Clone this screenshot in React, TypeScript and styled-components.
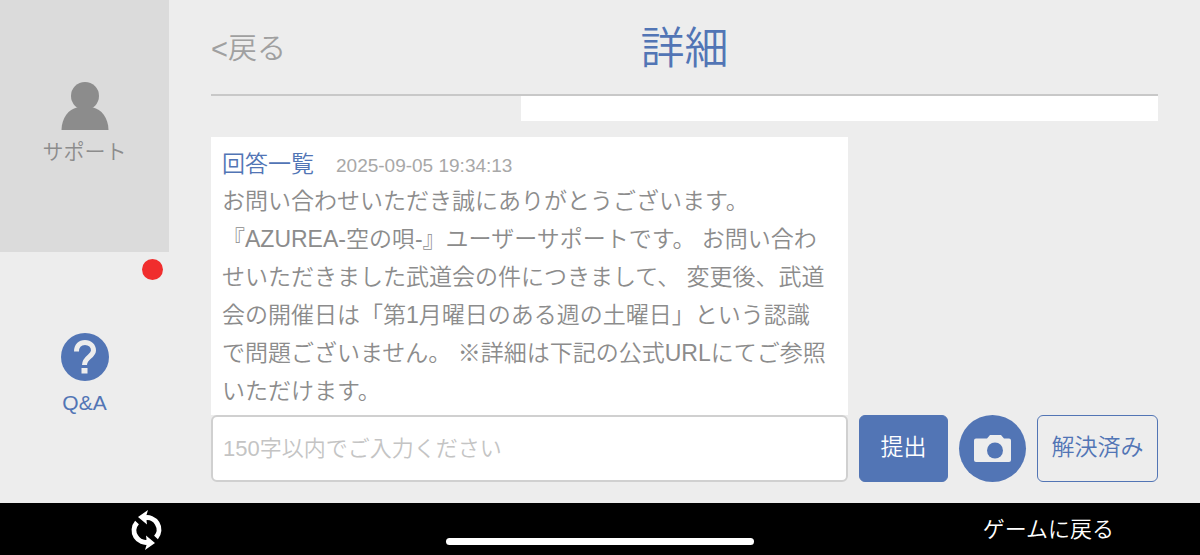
import React from "react";
import styled, { createGlobalStyle } from "styled-components";

const blue = "#5275b5";
const gray = "#8c8c8c";

const GlobalStyle = createGlobalStyle`
  *, *::before, *::after { box-sizing: border-box; }
  body {
    margin: 0;
    background: #ededed;
    color: ${gray};
    font-family: "Liberation Sans", "Noto Sans CJK JP", sans-serif;
    font-weight: 350;
  }
  button, input { font: inherit; }
`;

const Page = styled.div`
  display: flex;
  flex-direction: column;
  height: 100vh;
`;

const Body = styled.div`
  display: flex;
  flex: 1;
  min-height: 0;
`;

const Sidebar = styled.nav`
  display: flex;
  flex-direction: column;
  flex: 0 0 169px;
`;

const Tab = styled.a<{ $active?: boolean }>`
  position: relative;
  flex: 1;
  display: flex;
  flex-direction: column;
  align-items: center;
  justify-content: center;
  gap: 8px;
  padding-bottom: 4px;
  background: ${(p) => (p.$active ? "#dbdbdb" : "transparent")};
  color: ${(p) => (p.$active ? gray : blue)};
  font-size: 21px;
  line-height: 28px;
  text-decoration: none;
`;

const TabIcon = styled.svg`
  width: 48px;
  height: 48px;
`;

const Badge = styled.span`
  position: absolute;
  top: 7px;
  right: 6px;
  width: 21px;
  height: 21px;
  border-radius: 50%;
  background: #f02d2d;
`;

const Main = styled.main`
  flex: 1;
  min-width: 0;
  display: flex;
  flex-direction: column;
  padding: 0 42px 21px;
`;

const Header = styled.header`
  display: grid;
  grid-template-columns: 1fr auto 1fr;
  align-items: center;
  height: 96px;
  padding-top: 4px;
  border-bottom: 2px solid #c8c8c8;
`;

const Back = styled.a`
  color: #a0a0a0;
  font-size: 29px;
  line-height: 40px;
  text-decoration: none;
`;

const Title = styled.h1`
  margin: 0;
  color: ${blue};
  font-size: 44px;
  font-weight: 350;
  line-height: 64px;
`;

const Thread = styled.div`
  flex: 1;
  min-height: 0;
  overflow: hidden;
  display: flex;
  flex-direction: column;
  gap: 16px;
`;

const OwnMessage = styled.div`
  flex: 0 0 25px;
  width: calc(100% - 310px);
  align-self: flex-end;
  background: #fff;
`;

const Reply = styled.article`
  flex: 1;
  width: calc(100% - 310px);
  padding: 11px 18px 0 11px;
  background: #fff;
  font-size: 23px;
  line-height: 38px;
`;

const ReplyHead = styled.div`
  display: flex;
  align-items: baseline;
  gap: 22px;
  line-height: 32px;
`;

const ReplyTitle = styled.h2`
  margin: 0;
  color: ${blue};
  font-size: 23px;
  font-weight: 350;
`;

const Time = styled.time`
  color: #a8a8a8;
  font-size: 19px;
`;

const Text = styled.p`
  margin: 0;
`;

const Form = styled.form`
  display: flex;
  gap: 11px;
  height: 67px;
`;

const Field = styled.input`
  flex: 1;
  min-width: 0;
  padding: 0 10px;
  border: 2px solid #d0d0d0;
  border-radius: 6px;
  background: #fff;
  color: ${gray};
  font-size: 22px;
  outline: none;
  &::placeholder { color: #c4c4c4; opacity: 1; }
`;

const Action = styled.button<{ $outline?: boolean }>`
  flex: 0 0 ${(p) => (p.$outline ? 121 : 89)}px;
  padding: 0 0 8px;
  border: 1px solid ${blue};
  border-radius: 6px;
  background: ${(p) => (p.$outline ? "transparent" : blue)};
  color: ${(p) => (p.$outline ? blue : "#fff")};
  font-size: 23px;
`;

const CameraButton = styled.button`
  flex: 0 0 67px;
  padding: 0;
  border: 0;
  border-radius: 50%;
  background: ${blue};
  svg { display: block; width: 67px; height: 67px; }
`;

const Footer = styled.footer`
  position: relative;
  display: flex;
  align-items: center;
  justify-content: space-between;
  height: 52px;
  padding: 0 86px 0 126px;
  background: #000;
`;

const FooterButton = styled.button`
  padding: 0;
  border: 0;
  background: none;
  color: #fff;
`;

const RefreshIcon = styled.svg`
  display: block;
  width: 40px;
  height: 46px;
`;

const ReturnLabel = styled.span`
  display: block;
  padding-bottom: 4px;
  font-size: 22px;
`;

const HomeIndicator = styled.div`
  position: absolute;
  bottom: 10px;
  left: 50%;
  width: 308px;
  height: 7px;
  margin-left: -154px;
  border-radius: 4px;
  background: #fff;
`;

export default function App() {
  return (
    <Page>
      <GlobalStyle />
      <Body>
        <Sidebar>
          <Tab href="#support" $active>
            <TabIcon viewBox="0 0 48 48" aria-hidden="true">
              <circle cx="24" cy="14" r="14" fill={gray} />
              <path d="M0.5 48C0.5 36 8 27 16 25.500h16C40 27 47.500 36 47.500 48z" fill={gray} />
            </TabIcon>
            サポート
          </Tab>
          <Tab href="#qa">
            <Badge />
            <TabIcon viewBox="0 0 48 48" aria-hidden="true">
              <circle cx="24" cy="24" r="24" fill={blue} />
              <path
                d="M15.500 18.500C15.500 12.500 19 9.500 24 9.500S32.500 13 32.500 17.500C32.500 23.500 23.500 24 23.500 32"
                fill="none"
                stroke="#ededed"
                strokeWidth="5"
              />
              <rect x="20.500" y="35" width="6" height="5.500" fill="#ededed" />
            </TabIcon>
            Q&amp;A
          </Tab>
        </Sidebar>
        <Main>
          <Header>
            <Back href="#back">&lt;戻る</Back>
            <Title>詳細</Title>
          </Header>
          <Thread>
            <OwnMessage />
            <Reply>
              <ReplyHead>
                <ReplyTitle>回答一覧</ReplyTitle>
                <Time dateTime="2025-09-05T19:34:13">2025-09-05 19:34:13</Time>
              </ReplyHead>
              <Text>
                お問い合わせいただき誠にありがとうございます。 『AZUREA-空の唄-』ユーザーサポートです。
                お問い合わせいただきました武道会の件につきまして、
                変更後、武道会の開催日は「第1月曜日のある週の土曜日」という認識で問題ございません。
                ※詳細は下記の公式URLにてご参照いただけます。
              </Text>
            </Reply>
          </Thread>
          <Form onSubmit={(e) => e.preventDefault()}>
            <Field type="text" maxLength={150} aria-label="お問い合わせ内容" placeholder="150字以内でご入力ください" />
            <Action type="submit">提出</Action>
            <CameraButton type="button" aria-label="写真を添付">
              <svg viewBox="0 0 67 67" aria-hidden="true">
                <path
                  d="M17 23.500h11l3-3.500h11l3 3.500h5a2 2 0 0 1 2 2v19.500a2 2 0 0 1-2 2H17a2 2 0 0 1-2-2V25.500a2 2 0 0 1 2-2z"
                  fill="#ededed"
                />
                <circle cx="36" cy="35.500" r="8" fill={blue} />
              </svg>
            </CameraButton>
            <Action type="button" $outline>解決済み</Action>
          </Form>
        </Main>
      </Body>
      <Footer>
        <FooterButton type="button" aria-label="再読み込み">
          <RefreshIcon viewBox="0 0 40 46" aria-hidden="true">
            <g id="arrow">
              <path d="M18 12A12 12 0 0 1 30 31.500" fill="none" stroke="#fff" strokeWidth="5" />
              <path d="M12 11L22 4L20 10.500L21 18.500z" fill="#fff" />
            </g>
            <use href="#arrow" transform="rotate(180 20.500 24)" />
          </RefreshIcon>
        </FooterButton>
        <FooterButton type="button">
          <ReturnLabel>ゲームに戻る</ReturnLabel>
        </FooterButton>
        <HomeIndicator />
      </Footer>
    </Page>
  );
}
